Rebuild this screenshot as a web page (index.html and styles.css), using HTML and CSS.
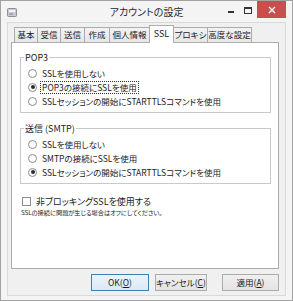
FILE: index.html
```html
<!DOCTYPE html>
<html lang="ja">
<head>
<meta charset="utf-8">
<title>アカウントの設定</title>
<link rel="stylesheet" href="styles.css">
</head>
<body>
<div class="window">
  <div class="titlebar">
    <div class="tb-left">
      <svg class="app-icon" width="10" height="9" viewBox="0 0 10 9">
        <rect x="0.5" y="0.5" width="9" height="8" rx="1" fill="#c9c9d6" stroke="#8d8d9c"/>
        <rect x="2" y="2" width="6" height="2" fill="#f4f4f8"/>
        <rect x="2" y="5" width="4" height="2" fill="#a9a9b8"/>
      </svg>
    </div>
    <div class="title">アカウントの設定</div>
    <div class="controls">
      <span class="ctl-min"></span>
      <span class="ctl-max"></span>
      <span class="ctl-close">
        <svg width="8" height="8" viewBox="0 0 8 8"><path d="M1 1 L7 7 M7 1 L1 7" stroke="#fff" stroke-width="1.4"/></svg>
      </span>
    </div>
  </div>
  <div class="client">
    <div class="tabs">
      <div class="tab w23">基本</div>
      <div class="tab w23">受信</div>
      <div class="tab w24">送信</div>
      <div class="tab w25">作成</div>
      <div class="tab w40">個人情報</div>
      <div class="tab tab-active w25">SSL</div>
      <div class="tab w33">プロキシ</div>
      <div class="tab tab-last w45">高度な設定</div>
    </div>
    <div class="panel">
      <fieldset class="group group-pop">
        <legend>POP3</legend>
        <div class="opt"><span class="radio"></span><span class="label">SSLを使用しない</span></div>
        <div class="opt"><span class="radio checked"></span><span class="label focus">POP3の接続にSSLを使用</span></div>
        <div class="opt"><span class="radio"></span><span class="label">SSLセッションの開始にSTARTTLSコマンドを使用</span></div>
      </fieldset>
      <fieldset class="group group-smtp">
        <legend>送信 (SMTP)</legend>
        <div class="opt"><span class="radio"></span><span class="label">SSLを使用しない</span></div>
        <div class="opt"><span class="radio"></span><span class="label">SMTPの接続にSSLを使用</span></div>
        <div class="opt"><span class="radio checked"></span><span class="label">SSLセッションの開始にSTARTTLSコマンドを使用</span></div>
      </fieldset>
      <div class="check-row"><span class="checkbox"></span><span class="label">非ブロッキングSSLを使用する</span></div>
      <div class="note">SSLの接続に問題が生じる場合はオフにしてください。</div>
    </div>
    <div class="buttons">
      <button class="btn btn-default btn-ok">OK(<u>O</u>)</button>
      <button class="btn btn-cancel">キャンセル(<u>C</u>)</button>
      <button class="btn btn-apply">適用(<u>A</u>)</button>
    </div>
  </div>
</div>
</body>
</html>
```
FILE: styles.css
```css
* { box-sizing: border-box; }
html, body { margin: 0; padding: 0; background: #ffffff; }
body {
  font-family: "Noto Sans CJK JP", "Noto Sans", sans-serif;
  font-feature-settings: "palt";
  color: #1b1b1b;
}
.window {
  width: 293px;
  height: 301px;
  border: 1px solid #a3a3a3;
  background: #f4f4f4;
  padding: 0 6px 4px 6px;
  display: flex;
  flex-direction: column;
}
.titlebar {
  height: 21px;
  display: grid;
  grid-template-columns: 1fr auto 1fr;
  align-items: start;
  margin: 0 -6px;
  padding: 0 6px 0 6px;
}
.tb-left { padding-top: 7px; }
.app-icon { display: block; }
.title {
  font-size: 10px;
  line-height: 12px;
  padding-top: 5px;
  color: #2a2a2a;
}
.controls {
  display: flex;
  justify-content: flex-end;
  align-items: flex-start;
}
.ctl-min {
  width: 6px;
  height: 2px;
  background: #333;
  margin-top: 10px;
  margin-right: 10px;
}
.ctl-max {
  width: 8px;
  height: 7px;
  border: 1px solid #333;
  border-top-width: 2px;
  margin-top: 6px;
  margin-right: 5px;
}
.ctl-close {
  width: 29px;
  height: 17px;
  background: #c7504f;
  display: flex;
  align-items: center;
  justify-content: center;
}
.client {
  flex: 1;
  background: #f0f0f0;
  border: 1px solid #d9d9d9;
  display: flex;
  flex-direction: column;
  padding: 0 6px 0 3px;
}
.tabs {
  height: 19px;
  display: flex;
  align-items: flex-end;
  margin-left: 3px;
  position: relative;
  z-index: 1;
}
.tab {
  height: 15px;
  border: 1px solid #acacac;
  border-right: none;
  border-bottom: none;
  background: linear-gradient(#f2f2f2, #e6e6e6);
  font-size: 8.5px;
  line-height: 13px;
  text-align: center;
  white-space: nowrap;
  color: #222;
}
.tab-last { border-right: 1px solid #acacac; }
.tab-active {
  height: 18px;
  background: #ffffff;
  border-right: 1px solid #acacac;
  margin-bottom: -1px;
  font-size: 9px;
  line-height: 15px;
}
.tab-active + .tab { border-left: none; }
.w23 { width: 23px; }
.w24 { width: 24px; }
.w25 { width: 25px; }
.w33 { width: 33px; }
.w40 { width: 40px; }
.w45 { width: 45px; }
.panel {
  height: 227px;
  background: #ffffff;
  border: 1px solid #acacac;
  padding: 0 7px 0 8px;
}
.group {
  margin: 8px 0 0 0;
  border: 1px solid #c9c9c9;
  padding: 2px 0 4px 7px;
  min-width: 0;
}
.group-smtp { margin-top: 9px; }
.group legend {
  font-size: 9px;
  line-height: 13px;
  padding: 0 1px;
  margin-left: -4px;
  color: #1b1b1b;
}
.opt {
  height: 14px;
  display: flex;
  align-items: center;
  font-size: 8.5px;
  white-space: nowrap;
}
.radio {
  width: 9px;
  height: 9px;
  border-radius: 50%;
  border: 1px solid #8c8c8c;
  background: #ffffff;
  margin-right: 5px;
  display: flex;
  align-items: center;
  justify-content: center;
  flex: none;
}
.radio.checked::after {
  content: "";
  width: 4px;
  height: 4px;
  border-radius: 50%;
  background: #2b2b2b;
}
.label { line-height: 11px; }
.focus {
  outline: 1px dotted #333;
  outline-offset: 0;
  padding: 0 1px;
  margin-left: -1px;
}
.check-row {
  margin-top: 10px;
  height: 14px;
  display: flex;
  align-items: center;
  font-size: 9px;
  padding-left: 2px;
}
.checkbox {
  width: 9px;
  height: 9px;
  border: 1px solid #8c8c8c;
  background: #fff;
  margin-right: 5px;
  flex: none;
}
.note {
  font-size: 6.2px;
  line-height: 8px;
  margin-top: 1px;
  padding-left: 1px;
  white-space: nowrap;
}
.buttons {
  display: flex;
  justify-content: flex-end;
  margin-top: 5px;
  gap: 6px;
}
.btn {
  height: 17px;
  padding: 0;
  font-family: inherit;
  font-size: 8.5px;
  line-height: 15px;
  color: #1b1b1b;
  border: 1px solid #acacac;
  background: linear-gradient(#f0f0f0, #e3e3e3);
  font-feature-settings: "palt";
  white-space: nowrap;
}
.btn u { text-underline-offset: 1px; }
.btn-default {
  border-color: #3c7fb1;
  background: linear-gradient(#eaf3fb, #dbe9f5);
}
.btn-ok { width: 58px; }
.btn-cancel { width: 52px; }
.btn-apply { width: 57px; margin-left: 9px; }
```
